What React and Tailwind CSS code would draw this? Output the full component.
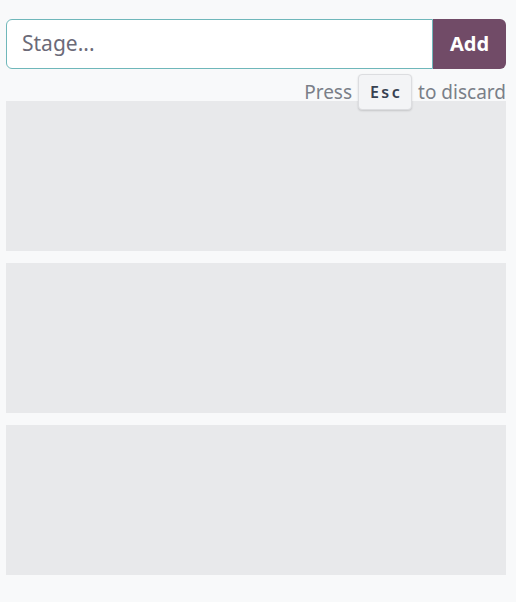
export default function App() {
  return (
    <div className="min-h-[602px] bg-[#f8f9fa] pl-[6px] pr-[10px] pt-[19px]" style={{ fontFamily: '"Noto Sans", "Open Sans", sans-serif' }}>
      <div className="flex h-[50px]">
        <div className="flex-1 flex items-center rounded-l-[6px] border border-[#6fb7ba] bg-white pl-[15px]">
          <span className="text-[21px] text-[#6b6a78]">Stage...</span>
        </div>
        <div className="w-[73px] flex items-center justify-center rounded-r-[6px] bg-[#714b67]">
          <span className="text-[20px] font-bold text-white">Add</span>
        </div>
      </div>
      <div className="h-[32px]">
        <div className="flex justify-end items-center pt-[5px] text-[19px] text-[#7a7f88] leading-[24px]">
          <span>Press</span>
          <span className="relative z-10 mx-[6px] inline-flex h-[36px] w-[54px] items-center justify-center rounded-[4px] border border-[#dcdde0] bg-[#f3f4f6] text-[16px] font-semibold tracking-[2.5px] pl-[2px] text-[#374151] shadow-[0_1px_2px_rgba(0,0,0,0.15)]">Esc</span>
          <span>to discard</span>
        </div>
      </div>
      <div className="flex flex-col gap-[12px]">
        <div className="h-[150px] bg-[#e8e9eb]" />
        <div className="h-[150px] bg-[#e8e9eb]" />
        <div className="h-[150px] bg-[#e8e9eb]" />
      </div>
    </div>
  );
}
